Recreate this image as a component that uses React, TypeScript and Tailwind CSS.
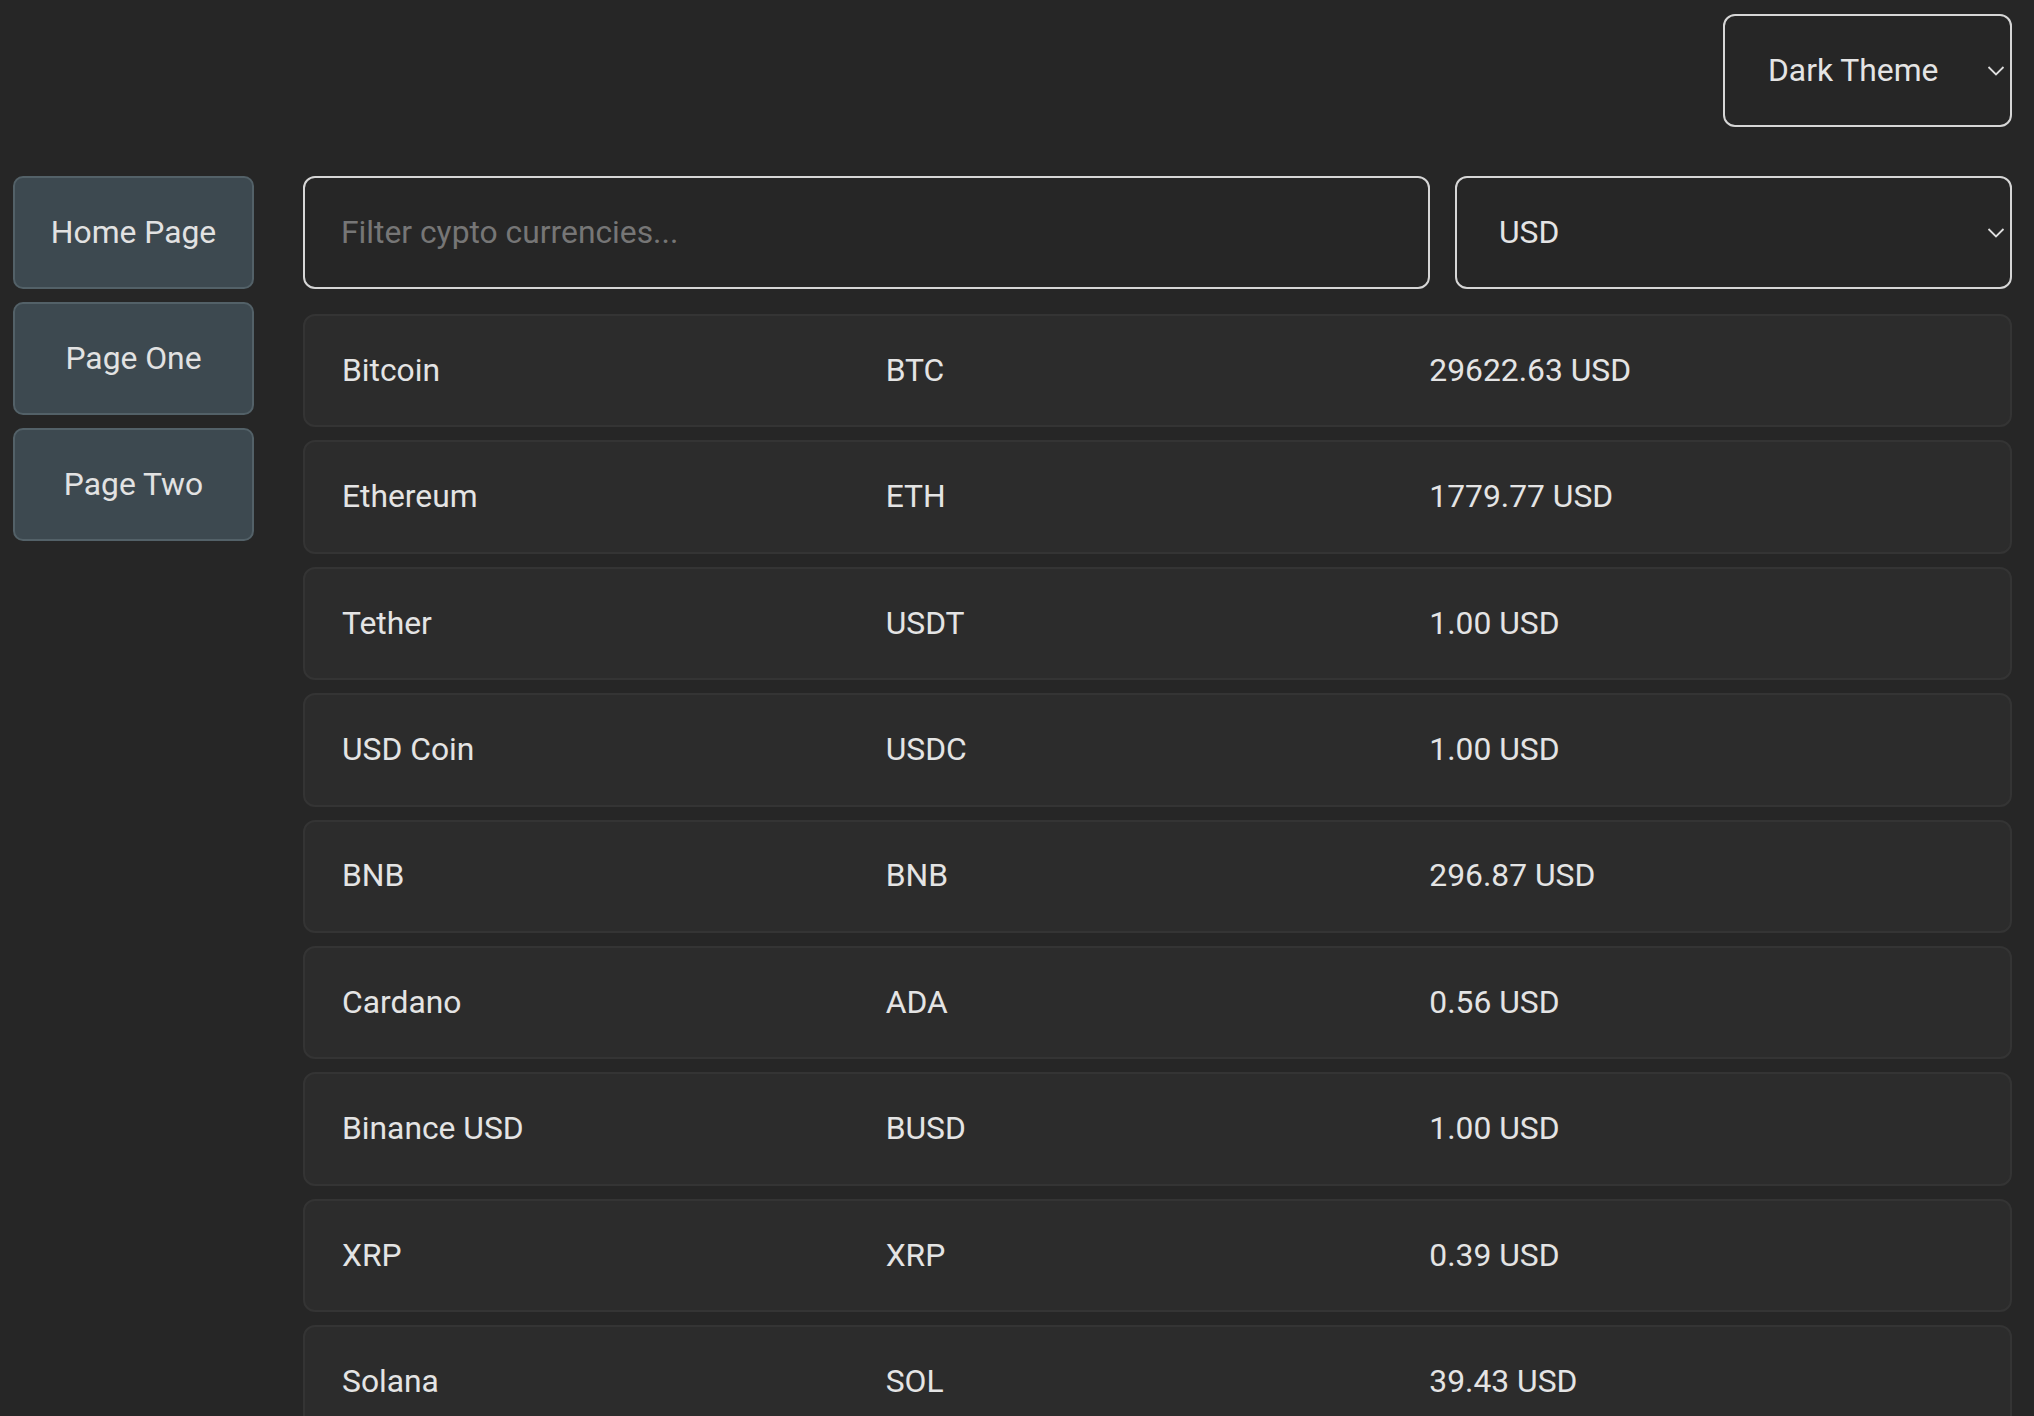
import React from "react";

const rows = [
  ["Bitcoin", "BTC", "29622.63 USD"],
  ["Ethereum", "ETH", "1779.77 USD"],
  ["Tether", "USDT", "1.00 USD"],
  ["USD Coin", "USDC", "1.00 USD"],
  ["BNB", "BNB", "296.87 USD"],
  ["Cardano", "ADA", "0.56 USD"],
  ["Binance USD", "BUSD", "1.00 USD"],
  ["XRP", "XRP", "0.39 USD"],
  ["Solana", "SOL", "39.43 USD"],
];

function Chevron() {
  return (
    <svg width="18" height="11" viewBox="0 0 18 11" className="absolute right-[5px] top-1/2 -translate-y-1/2">
      <polyline points="1.5,1.5 9,9 16.5,1.5" fill="none" stroke="#dcdcdc" strokeWidth="1.8" />
    </svg>
  );
}

export default function App() {
  return (
    <div className="h-[1416px] overflow-hidden bg-[#262626] text-[#e4e4e4] font-['Roboto',sans-serif]">
      <div className="flex justify-end pt-[14px] pr-[22px]">
        <div className="relative flex h-[113px] w-[289px] items-center rounded-[12px] border-2 border-[#d6d6d6] pl-[43px] text-[31.8px]">
          Dark Theme
          <Chevron />
        </div>
      </div>
      <div className="flex pl-[13px] pr-[22px] pt-[49px]">
        <div className="flex w-[241px] shrink-0 flex-col gap-[13px]">
          {["Home Page", "Page One", "Page Two"].map((t) => (
            <div
              key={t}
              className="flex h-[113px] items-center justify-center rounded-[10px] border-2 border-[#536168] bg-[#3d4950] text-[31.8px] text-[#e2e2e2]"
            >
              {t}
            </div>
          ))}
        </div>
        <div className="ml-[49px] flex flex-1 flex-col">
          <div className="flex gap-[25px]">
            <div className="flex h-[113px] w-[1127px] items-center rounded-[12px] border-2 border-[#d6d6d6] pl-[36px] text-[31.8px] text-[#767676]">
              Filter cypto currencies...
            </div>
            <div className="relative flex h-[113px] flex-1 items-center rounded-[12px] border-2 border-[#d6d6d6] pl-[42px] text-[31.8px]">
              USD
              <Chevron />
            </div>
          </div>
          <div className="mt-[25px] flex flex-col gap-[13px]">
            {rows.map((r) => (
              <div
                key={r[0]}
                className="grid h-[113.4px] shrink-0 grid-cols-3 items-center rounded-[12px] border-2 border-[#343434] bg-[#2c2c2c] px-[37px] text-[31.8px]"
              >
                <div>{r[0]}</div>
                <div>{r[1]}</div>
                <div>{r[2]}</div>
              </div>
            ))}
          </div>
        </div>
      </div>
    </div>
  );
}
